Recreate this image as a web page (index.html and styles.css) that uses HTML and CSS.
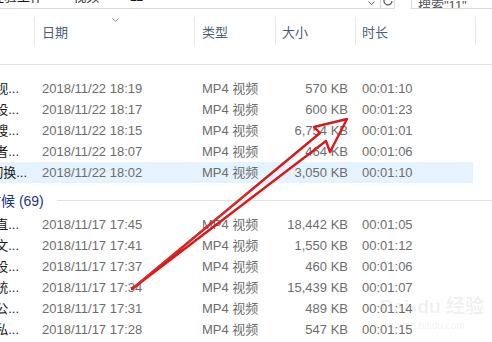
FILE: index.html
```html
<!DOCTYPE html>
<html lang="zh-CN">
<head>
  <meta charset="UTF-8">
  <title>11 - 视频</title>
  <link rel="stylesheet" href="styles.css">
</head>
<body>
  <div class="toolbar">
    <div class="address">
      <div class="crumbs">
        <span>百度经验工作</span><span class="crumb-sep">›</span><span>视频</span><span class="crumb-sep">›</span><span>11</span>
      </div>
      <svg class="drop" width="7" height="5" viewBox="0 0 7 5"><path d="M0.5 0.5 L3.5 3.5 L6.5 0.5" fill="none" stroke="#6b6b6b" stroke-width="1"/></svg>
      <div class="refresh">
        <svg width="12" height="12" viewBox="0 0 12 12"><path d="M10 6 A4 4 0 1 1 8.2 2.6" fill="none" stroke="#555" stroke-width="1.2"/><path d="M7 1 L9.4 2.2 L8.2 4.6" fill="none" stroke="#555" stroke-width="1.2"/></svg>
      </div>
    </div>
    <div class="search">搜索"11"</div>
  </div>

  <div class="view">
    <div class="cols">
      <div class="col col-name">名称</div>
      <div class="col col-date">日期
        <svg class="sort" width="7" height="4" viewBox="0 0 7 4"><path d="M0.5 0.5 L3.5 3.3 L6.5 0.5" fill="none" stroke="#8a8a8a" stroke-width="1"/></svg>
      </div>
      <div class="col col-type">类型</div>
      <div class="col col-size">大小</div>
      <div class="col col-dur">时长</div>
    </div>

    <div class="group"><span class="group-title">今天 (5)</span><span class="group-line"></span></div>
    <div class="row"><span class="c-name">怎样录制视...</span><span class="c-date">2018/11/22 18:19</span><span class="c-type">MP4 视频</span><span class="c-size">570 KB</span><span class="c-dur">00:01:10</span></div>
    <div class="row"><span class="c-name">如何设...</span><span class="c-date">2018/11/22 18:17</span><span class="c-type">MP4 视频</span><span class="c-size">600 KB</span><span class="c-dur">00:01:23</span></div>
    <div class="row"><span class="c-name">打开搜...</span><span class="c-date">2018/11/22 18:15</span><span class="c-type">MP4 视频</span><span class="c-size">6,754 KB</span><span class="c-dur">00:01:01</span></div>
    <div class="row"><span class="c-name">关闭读者...</span><span class="c-date">2018/11/22 18:07</span><span class="c-type">MP4 视频</span><span class="c-size">464 KB</span><span class="c-dur">00:01:06</span></div>
    <div class="row row-hover"><span class="c-name c-name-wide">快速切换...</span><span class="c-date">2018/11/22 18:02</span><span class="c-type">MP4 视频</span><span class="c-size">3,050 KB</span><span class="c-dur">00:01:10</span></div>

    <div class="group"><span class="group-title">本月早些时候 (69)</span><span class="group-line"></span></div>
    <div class="row"><span class="c-name">开启直...</span><span class="c-date">2018/11/17 17:45</span><span class="c-type">MP4 视频</span><span class="c-size">18,442 KB</span><span class="c-dur">00:01:05</span></div>
    <div class="row"><span class="c-name">隐藏文...</span><span class="c-date">2018/11/17 17:41</span><span class="c-type">MP4 视频</span><span class="c-size">1,550 KB</span><span class="c-dur">00:01:12</span></div>
    <div class="row"><span class="c-name">如何设...</span><span class="c-date">2018/11/17 17:37</span><span class="c-type">MP4 视频</span><span class="c-size">460 KB</span><span class="c-dur">00:01:06</span></div>
    <div class="row"><span class="c-name">重装系统...</span><span class="c-date">2018/11/17 17:34</span><span class="c-type">MP4 视频</span><span class="c-size">15,439 KB</span><span class="c-dur">00:01:07</span></div>
    <div class="row"><span class="c-name">关闭公...</span><span class="c-date">2018/11/17 17:31</span><span class="c-type">MP4 视频</span><span class="c-size">489 KB</span><span class="c-dur">00:01:14</span></div>
    <div class="row"><span class="c-name">打开私...</span><span class="c-date">2018/11/17 17:28</span><span class="c-type">MP4 视频</span><span class="c-size">547 KB</span><span class="c-dur">00:01:15</span></div>
  </div>

  <div class="watermark">
    <div class="wm-logo">Bai<span class="wm-paw">●</span>du 经验</div>
    <div class="wm-url">jingyan.baidu.com</div>
  </div>

  <!-- hand drawn red arrow over the list -->
  <svg class="arrow" width="492" height="342" viewBox="0 0 492 342">
    <path d="M132 289 L320 133 L314 127 L347 119 L330 152 L326 141 Z" fill="none" stroke="#d81a1a" stroke-width="2.4" stroke-linejoin="round"/>
    <path d="M134 287 L250 191" fill="none" stroke="#e02a2a" stroke-width="1.4"/>
  </svg>
</body>
</html>
```
FILE: styles.css
```css
body {
  margin: 0;
  width: 492px;
  height: 342px;
  overflow: hidden;
  background: #fff;
  font-family: "Liberation Sans", "Noto Sans CJK SC", sans-serif;
  font-size: 13px;
  color: #1a1a1a;
  position: relative;
}
.toolbar {
  display: flex;
  height: 9px;
}
.address {
  flex: 1;
  display: flex;
  align-items: flex-start;
  border-bottom: 1px solid #d9d9d9;
  border-right: 1px solid #d9d9d9;
  overflow: hidden;
}
.crumbs {
  flex: 1;
  display: flex;
  margin-top: -10px;
  margin-left: -35px;
  line-height: 14px;
  white-space: nowrap;
  color: #1a1a1a;
}
.crumb-sep {
  margin: 0 13px;
  color: #777;
}
.drop {
  margin-top: 1px;
  margin-right: 5px;
}
.refresh {
  width: 13px;
  height: 9px;
  border-left: 1px solid #d9d9d9;
  overflow: hidden;
}
.refresh svg {
  display: block;
  margin: -5px 0 0 1px;
}
.search {
  width: 74px;
  height: 8px;
  margin-left: 16px;
  padding-left: 6px;
  border-left: 1px solid #d9d9d9;
  border-bottom: 1px solid #d9d9d9;
  line-height: 12px;
  overflow: hidden;
  color: #555;
  white-space: nowrap;
}
.view {
  margin-left: -80px;
}
.cols {
  display: flex;
  height: 38px;
  padding-top: 8px;
  box-sizing: border-box;
}
.col {
  box-sizing: border-box;
  height: 28px;
  display: flex;
  align-items: center;
  border-right: 1px solid #e8e8e8;
  color: #4c607a;
  position: relative;
}
.col-name { width: 115px; padding-left: 7px; }
.col-date { width: 160px; padding-left: 7px; }
.col-type { width: 81px; padding-left: 7px; }
.col-size { width: 80px; padding-left: 6px; }
.col-dur  { width: 120px; padding-left: 6px; }
.sort {
  position: absolute;
  top: 1px;
  left: 77px;
}
.group {
  display: flex;
  align-items: center;
  height: 31px;
  padding-top: 3px;
  padding-left: 11px;
  box-sizing: border-box;
}
.group-title {
  font-size: 14px;
  color: #1e3287;
  white-space: nowrap;
}
.group-line {
  flex: 1;
  height: 1px;
  margin-left: 13px;
  background: #e2e2e2;
}
.row {
  display: flex;
  align-items: center;
  height: 21px;
  width: 553px;
  line-height: 21px;
  white-space: nowrap;
  color: #6d6d6d;
}
.row span {
  box-sizing: border-box;
  overflow: hidden;
}
.row-hover {
  background: #e5f3ff;
}
.c-name {
  width: 115px;
  padding-right: 16px;
  text-align: right;
  color: #1a1a1a;
}
.c-name-wide {
  padding-right: 8px;
}
.c-date { width: 160px; padding-left: 7px; }
.c-type { width: 81px; padding-left: 7px; }
.c-size { width: 80px; padding-right: 8px; text-align: right; }
.c-dur  { width: 117px; padding-left: 6px; }
.watermark {
  position: absolute;
  left: 380px;
  top: 296px;
  color: rgba(140, 140, 140, 0.13);
  pointer-events: none;
}
.wm-logo {
  font-size: 19px;
  font-weight: bold;
  line-height: 22px;
}
.wm-paw {
  font-size: 13px;
}
.wm-url {
  font-size: 10px;
  line-height: 12px;
  padding-left: 4px;
}
.arrow {
  position: absolute;
  top: 0;
  left: 0;
  pointer-events: none;
}
```
